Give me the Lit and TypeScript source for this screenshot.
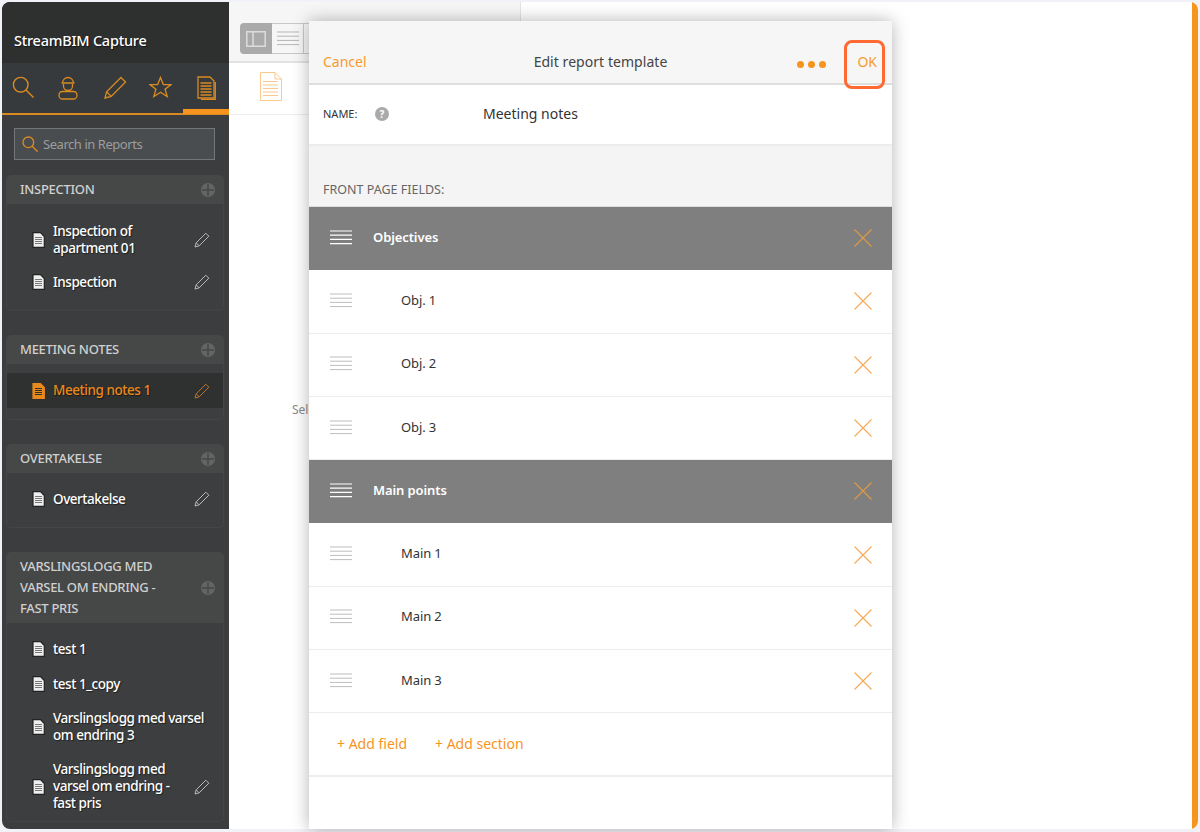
import { LitElement, html, css } from "lit";
import { customElement } from "lit/decorators.js";

const search = (c: string, s: number, w = 1.5) => html`<svg width=${s} height=${s} viewBox="0 0 24 24" fill="none" stroke=${c} stroke-width=${w}><circle cx="9.5" cy="9.5" r="8"/><path d="M15.3 15.3 23.5 23.5"/></svg>`;
const pencil = (c: string, s = 16) => html`<svg width=${s} height=${s} viewBox="0 0 16 16" fill="none" stroke=${c} stroke-width="1"><path d="M1 15 2.2 10.8 11.8 1.2 14.8 4.2 5.2 13.8ZM2.2 10.8 5.2 13.8"/></svg>`;
const doc = (c: string, fill: string, line: string) => html`<svg width="13" height="16" viewBox="0 0 13 16"><path d="M1 .7H8.5L12.3 4.5V15.3H1Z" fill=${fill} stroke=${c} stroke-width="1.2"/><path d="M3 5.5H10M3 7.5H10M3 9.5H10M3 11.5H10" stroke=${line} stroke-width="1"/></svg>`;
const plus = html`<svg width="14" height="14" viewBox="0 0 14 14"><circle cx="7" cy="7" r="7" fill="#636565"/><path d="M7 1V13M1 7H13" stroke="#464747" stroke-width="1.4"/></svg>`;
const close = (c: string) => html`<svg class="x" width="18" height="18" viewBox="0 0 18 18" fill="none" stroke=${c} stroke-width="1.1"><path d="M.5 .5 17.5 17.5M17.5 .5 .5 17.5"/></svg>`;
const grip = (c: string, w: number) => html`<svg width="22" height="15" viewBox="0 0 22 15" fill="none" stroke=${c} stroke-width=${w}><path d="M0 1H22M0 5.2H22M0 9.4H22M0 13.6H22"/></svg>`;

interface Item { t: string[]; pen?: boolean; active?: boolean; }
interface Group { title: string[]; items: Item[]; cls: string; }

const groups: Group[] = [
  { title: ["INSPECTION"], cls: "g1", items: [{ t: ["Inspection of", "apartment 01"], pen: true }, { t: ["Inspection"], pen: true }] },
  { title: ["MEETING NOTES"], cls: "g2", items: [{ t: ["Meeting notes 1"], pen: true, active: true }] },
  { title: ["OVERTAKELSE"], cls: "g3", items: [{ t: ["Overtakelse"], pen: true }] },
  { title: ["VARSLINGSLOGG MED", "VARSEL OM ENDRING -", "FAST PRIS"], cls: "g4", items: [{ t: ["test 1"] }, { t: ["test 1_copy"] }, { t: ["Varslingslogg med varsel", "om endring 3"] }, { t: ["Varslingslogg med", "varsel om endring -", "fast pris"], pen: true }] },
];

interface Row { t: string; head?: boolean; }
const rows: Row[] = [
  { t: "Objectives", head: true }, { t: "Obj. 1" }, { t: "Obj. 2" }, { t: "Obj. 3" },
  { t: "Main points", head: true }, { t: "Main 1" }, { t: "Main 2" }, { t: "Main 3" },
];

@customElement("app-root")
export class AppRoot extends LitElement {
  static styles = css`
    :host { display: block; width: 1200px; height: 832px; background: #f1f1f8; position: relative; overflow: hidden;
      font-family: "Noto Sans", "Open Sans", sans-serif; }
    .frame { margin: 2px 2px 0; height: 827px; display: flex; background: #fff; border-radius: 8px; overflow: hidden; position: relative; }
    .side { width: 227px; background: #3b3d3e; flex: none; display: flex; flex-direction: column; }
    .brand { height: 61px; background: #2e2f2f; box-sizing: border-box; padding: 28px 0 0 12px; color: #fff; font-size: 14.5px; font-weight: 500; line-height: 20px; letter-spacing: -.25px; text-shadow: 1px 1px 1px rgba(0,0,0,.6); }
    .tabs { height: 52px; background: #363a3d; display: flex; box-sizing: border-box; border-bottom: 2px solid #d98a20; position: relative; }
    .tab { width: 45.6px; display: flex; justify-content: center; padding-top: 13px; }
    .tab.shift { margin-left: -2px; margin-right: 2px; }
    .tab.on::after { content: ""; position: absolute; right: 0; width: 46px; height: 5px; bottom: -1px; background: #f7941e; }
    .search { margin: 13px 14px 0 12px; height: 32px; box-sizing: border-box; background: #4a4d4f; border: 1px solid #737678; display: flex; align-items: center; gap: 5px; padding-left: 7px; color: #9b9d9e; font-size: 13px; letter-spacing: -.45px; }
    .gh { margin: 0 5px 0 4px; background: #464747; border-radius: 5px 5px 0 0; display: flex; align-items: center; justify-content: space-between; padding: 4px 9px 4px 14px; color: #d0d0d0; font-size: 13px; font-weight: 500; letter-spacing: -.3px; line-height: 21px; }
    .gh.first { margin-top: 15px; }
    .gh.next { margin-top: 24px; }
    .gb { margin: 0 5px 0 4px; background: #3d3e3f; border: 1px solid #444546; border-top: 0; border-radius: 0 0 5px 5px; box-sizing: border-box; }
    .g1 { padding: 10px 0 11px; }
    .g2 { padding: 9px 0 11px; }
    .g3 { padding: 9px 0 11px; }
    .g4 { padding: 8.5px 0 0; }
    .item { display: flex; align-items: center; padding: 8.5px 13px 8.5px 25px; color: #fff; font-size: 13.5px; line-height: 17px; letter-spacing: -.45px; font-weight: 500; gap: 8px; text-shadow: 1px 1px 1px rgba(0,0,0,.5); }
    .g4 .item { padding-top: 9px; padding-bottom: 9px; }
    .g4 .item.multi { padding-top: 8.500px; padding-bottom: 8.500px; }
    .item span { flex: 1; }
    .item.active { background: #2f3030; color: #e8891c; padding-top: 9px; padding-bottom: 9px; }
    .item svg { flex: none; }
    .main { flex: 1; display: flex; }
    .left { width: 291px; border-right: 1px solid #e4e4e4; display: flex; flex-direction: column; flex: none; }
    .tb { height: 61px; background: #f6f6f6; border-bottom: 2px solid #e2e2e2; box-sizing: border-box; padding: 21px 0 0 11px; display: flex; }
    .seg { width: 32px; height: 31px; box-sizing: border-box; border: 1px solid #c8c8c8; border-left: 0; display: flex; align-items: center; justify-content: center; }
    .seg.on { background: #aaa; border: 0; border-radius: 4px 0 0 4px; }
    .dochead { height: 52px; box-sizing: border-box; border-bottom: 1px solid #ececec; padding: 9px 0 0 31px; }
    .sel { margin: 287px 0 0 63px; color: #8a8a8a; font-size: 12px; line-height: 16px; }
    .right { flex: 1; }
    .bar { width: 6px; background: #f7941e; flex: none; }
    .modal { position: absolute; left: 309px; top: 21px; width: 583px; height: 808px; background: #fff; box-shadow: 0 0 16px rgba(0,0,0,.3); display: flex; flex-direction: column; }
    .mh { height: 64px; flex: none; background: #f6f6f6; border-bottom: 2px solid #dedede; box-sizing: border-box; display: flex; align-items: flex-end; padding: 0 15px 11px 14px; position: relative; font-size: 14px; line-height: 20px; }
    .cancel { color: #f79a2e; }
    .title { position: absolute; left: 0; right: 0; text-align: center; color: #444; bottom: 11px; letter-spacing: .05px; }
    .dots { margin-left: auto; margin-right: 31px; display: flex; gap: 4px; padding-bottom: 4px; }
    .dots i { width: 7px; height: 7px; border-radius: 50%; background: #f7941e; }
    .ok { color: #f79a2e; }
    .hl { position: absolute; left: 535px; top: 19px; width: 41px; height: 49px; box-sizing: border-box; border: 3px solid #ff6a33; border-radius: 8px; }
    .name { height: 61px; flex: none; display: flex; align-items: center; padding: 0 0 2px 14px; border-bottom: 2px solid #ececec; box-sizing: border-box; }
    .nl { width: 37px; font-size: 11px; color: #333; }
    .q { width: 14px; height: 14px; margin-left: 15px; border-radius: 50%; background: #aaa; color: #fff; font-size: 10px; font-weight: 700; line-height: 14px; text-align: center; }
    .nv { margin: 0 0 1px 94px; font-size: 14px; color: #333; }
    .fp { height: 61px; flex: none; background: #f4f4f4; box-sizing: border-box; padding: 35px 0 0 14px; font-size: 12.5px; color: #666; line-height: 18px; border-bottom: 1px solid #ddd; }
    .row { height: 63.3px; flex: none; box-sizing: border-box; display: flex; align-items: center; padding: 0 20px 0 21px; border-bottom: 1px solid #ececec; color: #333; font-size: 13px; letter-spacing: -.1px; }
    .row svg { margin-bottom: 2px; }
    .row svg.x { margin-bottom: 0; }
    .row.head svg.x { margin-bottom: 2px; }
    .row span { margin-left: 49px; flex: 1; padding-bottom: 3px; }
    .row.head { background: #7f7f7f; color: #fff; font-weight: 600; border-bottom: 0; }
    .row.head span { margin-left: 21px; }
    .add { height: 64px; flex: none; box-sizing: border-box; border-bottom: 2px solid #eee; display: flex; align-items: center; gap: 28px; padding: 0 0 2px 28px; color: #f7941e; font-size: 14px; }
  `;

  renderGroup(g: Group, i: number) {
    return html`
      <div class="gh ${i === 0 ? "first" : "next"}">
        <div>${g.title.map((l) => html`${l}<br />`)}</div>${plus}
      </div>
      <div class="gb ${g.cls}">
        ${g.items.map((it) => html`<div class="item ${it.active ? "active" : ""} ${it.t.length > 1 ? "multi" : ""}">
          ${it.active ? doc("#e8891c", "#e8891c", "#2f3030") : doc("#222", "#eee", "#777")}
          <span>${it.t.map((l) => html`${l}<br />`)}</span>
          ${it.pen ? pencil(it.active ? "#b5752a" : "#bbb") : ""}
        </div>`)}
      </div>`;
  }

  render() {
    const tc = "#d98a20";
    return html`
      <div class="frame">
        <div class="side">
          <div class="brand">StreamBIM Capture</div>
          <div class="tabs">
            <div class="tab shift">${search(tc, 22)}</div>
            <div class="tab shift"><svg width="20" height="24" viewBox="0 0 20 24" fill="none" stroke=${tc} stroke-width="1.3"><path d="M4.500 7a5.500 5.500 0 0 1 11 0ZM3.500 7H16.500M5.500 8v2a4.500 4.500 0 0 0 9 0V8"/><rect x="1" y="15.500" width="18" height="7.500" rx="3.500"/></svg></div>
            <div class="tab"><svg width="23" height="23" viewBox="0 0 16 16" fill="none" stroke=${tc} stroke-width=".9"><path d="M.7 15.300 1.800 11 11.800 1 15 4.200 5 14.200ZM1.800 11 5 14.200"/></svg></div>
            <div class="tab"><svg width="23" height="22" viewBox="0 0 24 23" fill="none" stroke=${tc} stroke-width="1.400"><path d="M12 1.500 15 9H23L16.800 13.800 19 21.500 12 17 5 21.500 7.200 13.800 1 9H9Z"/></svg></div>
            <div class="tab on"><svg width="19" height="24" viewBox="0 0 19 24" fill="none" stroke=${tc} stroke-width="1.300"><path d="M1 1H13L17 5V22H1Z"/><path d="M18.300 6V23.300H4"/><path d="M3.500 7H14.500M3.500 10H14.500M3.500 13H14.500M3.500 16H14.500M3.500 19H14.500" stroke-width="1.500"/></svg></div>
          </div>
          <div class="search">${search("#d98a20", 16, 2)}<span>Search in Reports</span></div>
          ${groups.map((g, i) => this.renderGroup(g, i))}
        </div>
        <div class="main">
          <div class="left">
            <div class="tb">
              <div class="seg on"><svg width="20" height="16" viewBox="0 0 20 16" fill="none" stroke="#ddd" stroke-width="1.500"><path d="M.8.8H19.200V15.200H.8ZM7 .8V15.200"/></svg></div>
              <div class="seg">${grip("#b5b5b5", 1)}</div>
              <div class="seg"></div>
            </div>
            <div class="dochead"><svg width="22" height="29" viewBox="0 0 22 29" fill="none" stroke="#fbc98b" stroke-width="1"><path d="M.5 .5H15L21.500 7V28.500H.5ZM15 .5V7H21.500"/><path d="M3 9.500H18M3 13H18M3 16.500H18M3 20H18M3 23.500H18" stroke-width="1.200"/></svg></div>
            <div class="sel">Select a report</div>
          </div>
          <div class="right"></div>
          <div class="bar"></div>
        </div>
      </div>
      <div class="modal">
        <div class="mh">
          <div class="cancel">Cancel</div>
          <div class="title">Edit report template</div>
          <div class="dots"><i></i><i></i><i></i></div>
          <div class="ok">OK</div>
        </div>
        <div class="name"><div class="nl">NAME:</div><div class="q">?</div><div class="nv">Meeting notes</div></div>
        <div class="fp">FRONT PAGE FIELDS:</div>
        ${rows.map((r) => html`<div class="row ${r.head ? "head" : ""}">
          ${r.head ? grip("#fff", 1.2) : grip("#bdbdbd", 1)}
          <span>${r.t}</span>
          ${close(r.head ? "#e09a45" : "#f7a955")}
        </div>`)}
        <div class="add"><div>+ Add field</div><div>+ Add section</div></div>
        <div class="hl"></div>
      </div>
    `;
  }
}
